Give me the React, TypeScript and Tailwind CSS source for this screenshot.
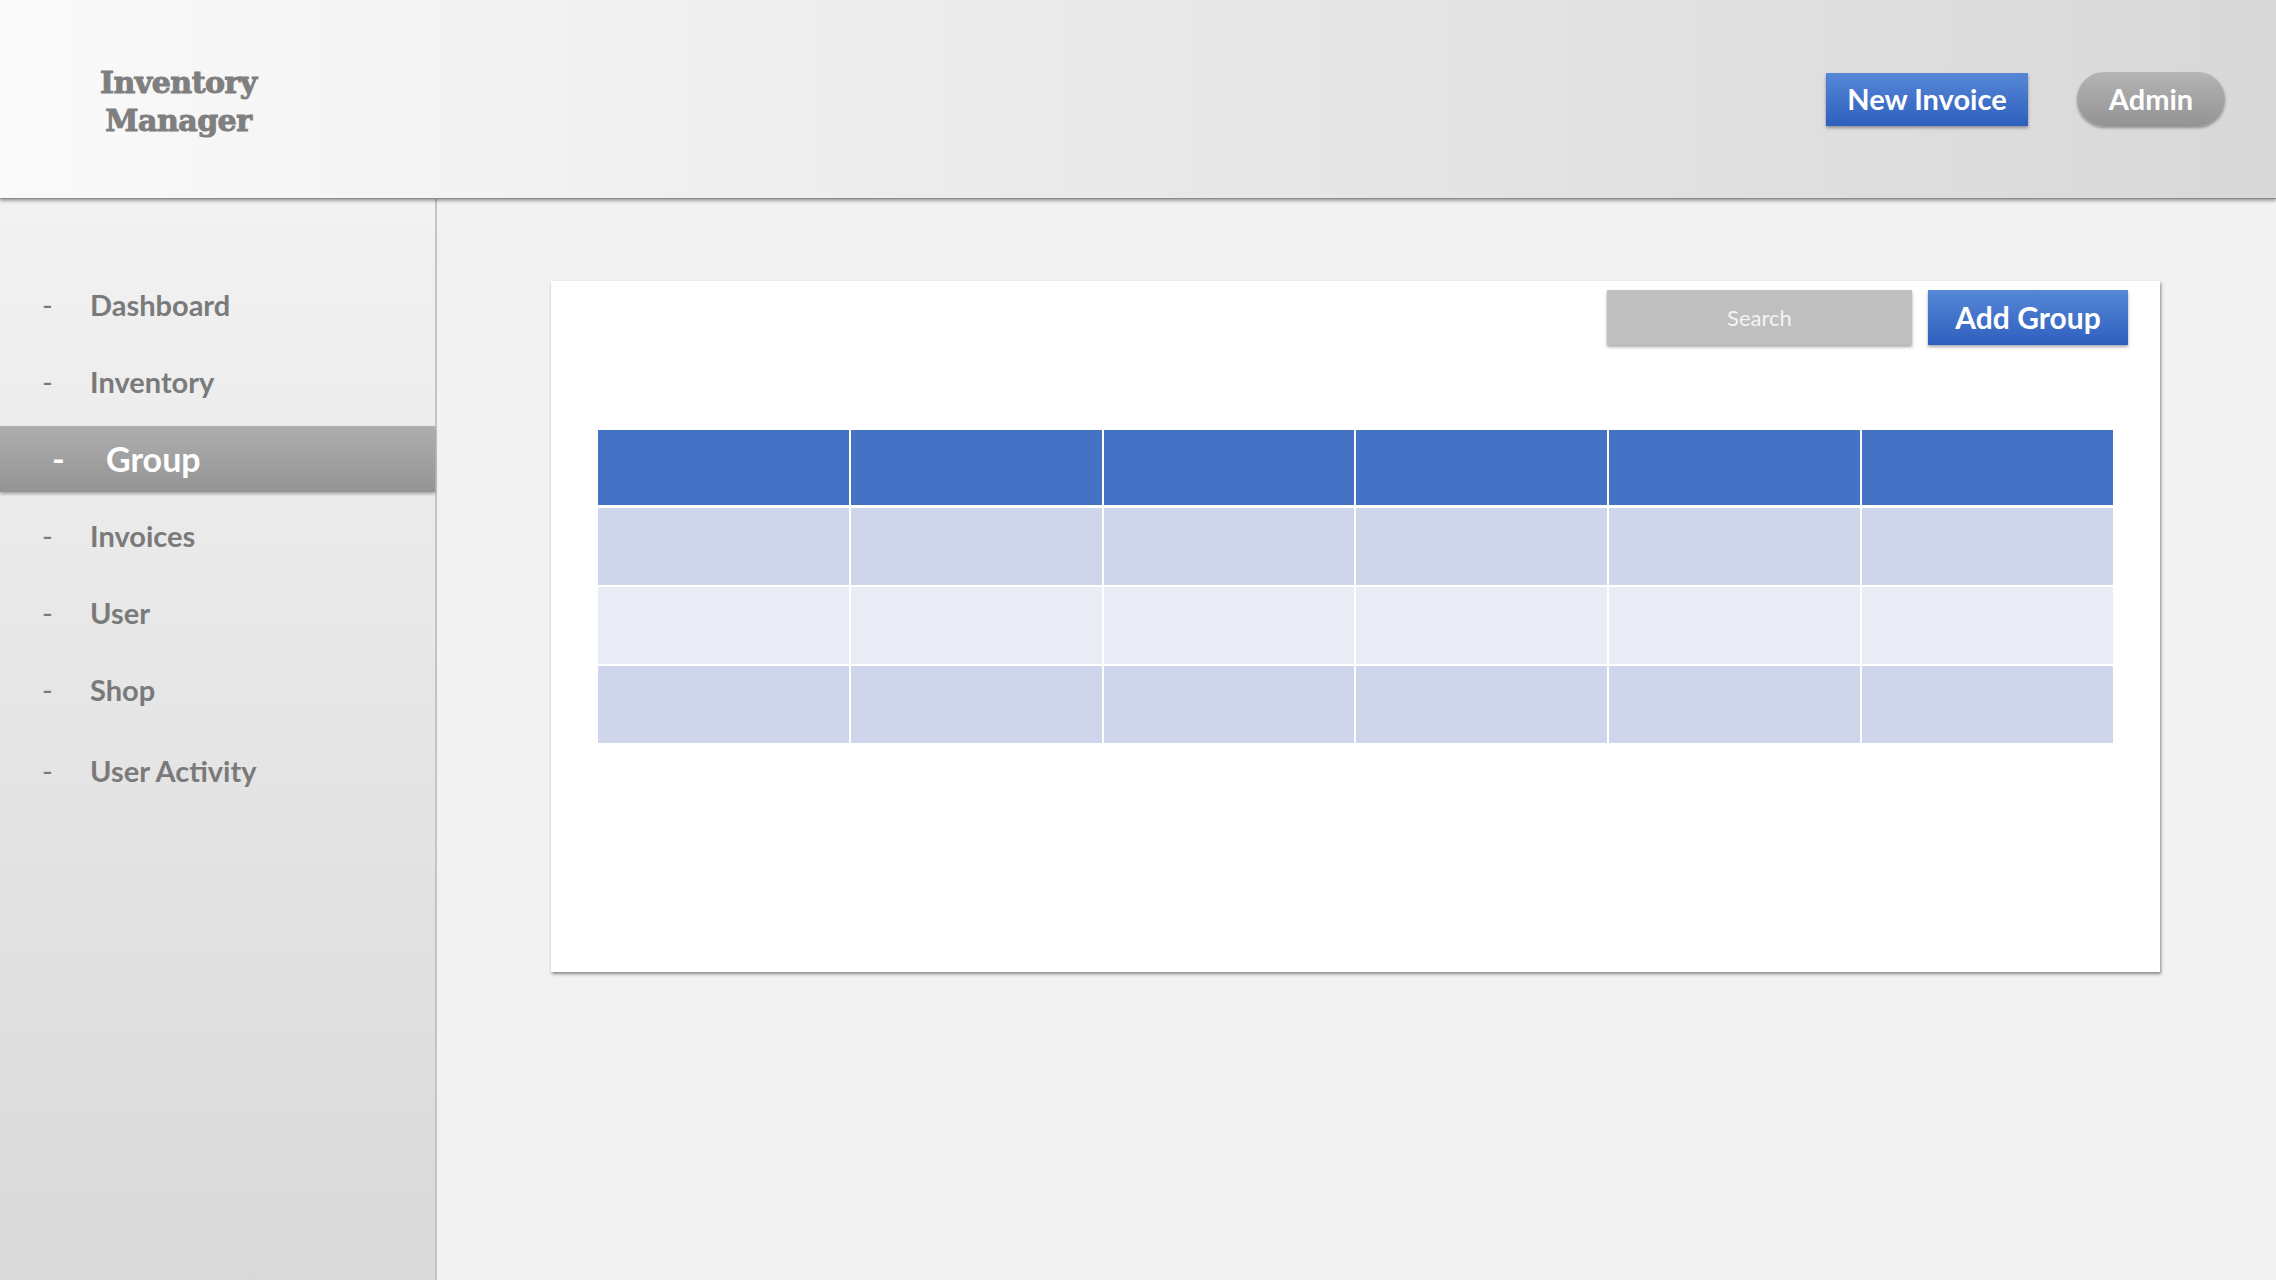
import React from 'react';

const navItems = ['Dashboard', 'Inventory', 'Group', 'Invoices', 'User', 'Shop', 'User Activity'];

const Header: React.FC = () => (
  <header className="relative z-10 flex h-[199px] items-center justify-between border-b border-[#8c8c8c] bg-gradient-to-r from-[#fafafa] to-[#d8d8d8] shadow-[0_2px_3px_rgba(0,0,0,0.35)]">
    <div
      className="ml-[100px] mt-[6px] text-center text-[30px] font-bold leading-[38px] tracking-[-0.5px] text-[#7f7f7f] [-webkit-text-stroke:1px_#7f7f7f]"
      style={{ fontFamily: '"DejaVu Serif", serif' }}
    >
      <div>Inventory</div>
      <div>Manager</div>
    </div>
    <div className="mr-[51px] flex items-center gap-[49px]" style={{ fontFamily: 'Lato, sans-serif' }}>
      <button className="h-[53px] w-[202px] bg-gradient-to-b from-[#5787d6] to-[#2e5fbe] text-[29px] font-bold text-white shadow-[0_2px_3px_rgba(0,0,0,0.35)]">
        New Invoice
      </button>
      <button className="h-[54px] w-[148px] rounded-full bg-gradient-to-b from-[#b5b5b5] to-[#939393] text-[29px] font-bold text-white shadow-[0_2px_3px_rgba(0,0,0,0.35)]">
        Admin
      </button>
    </div>
  </header>
);

const Sidebar: React.FC = () => (
  <aside
    className="flex w-[437px] flex-col border-r-2 border-[#c4c4c4] bg-gradient-to-b from-[#f2f2f2] to-[#d9d9d9] pt-[67px]"
    style={{ fontFamily: 'Lato, sans-serif' }}
  >
    {navItems.map((item) =>
      item === 'Group' ? (
        <div key={item} className="flex h-[77px] items-center">
          <div className="flex h-[66px] w-full items-center bg-gradient-to-b from-[#aeaeae] to-[#949494] text-[34px] font-bold text-white shadow-[0_2px_3px_rgba(0,0,0,0.3)]">
            <span className="w-[106px] pl-[52px]">-</span>
            <span>{item}</span>
          </div>
        </div>
      ) : (
        <div
          key={item}
          className={`flex h-[77px] items-center text-[29px] font-bold text-[#7a7a7a] ${item === 'User Activity' ? 'mt-[4px]' : ''}`}
        >
          <span className="w-[90px] pl-[42px] font-normal">-</span>
          <span>{item}</span>
        </div>
      )
    )}
  </aside>
);

const GroupTable: React.FC = () => (
  <div className="flex flex-col bg-white">
    <div className="grid h-[75px] grid-cols-6 gap-x-[2px]">
      {Array.from({ length: 6 }).map((_, i) => (
        <div key={i} className="bg-[#4472c4]" />
      ))}
    </div>
    {[0, 1, 2].map((r) => (
      <div key={r} className={`grid h-[77px] grid-cols-6 gap-x-[2px] ${r === 0 ? 'mt-[3px]' : 'mt-[2px]'}`}>
        {Array.from({ length: 6 }).map((_, i) => (
          <div key={i} className={r % 2 === 0 ? 'bg-[#cfd5ea]' : 'bg-[#e9ebf5]'} />
        ))}
      </div>
    ))}
  </div>
);

export default function App() {
  return (
    <div className="flex h-[1280px] w-full flex-col overflow-hidden bg-[#f2f2f2]">
      <Header />
      <div className="flex flex-1">
        <Sidebar />
        <main className="flex-1 pl-[114px] pt-[82px]">
          <div className="flex h-[691px] w-[1609px] flex-col bg-white shadow-[1px_2px_3px_rgba(0,0,0,0.45)]">
            <div className="flex justify-end gap-[16px] pr-[32px] pt-[9px]" style={{ fontFamily: 'Lato, sans-serif' }}>
              <div className="flex h-[55px] w-[305px] items-center justify-center bg-[#bfbfbf] text-[22px] text-[#f4f4f4] shadow-[0_2px_3px_rgba(0,0,0,0.35)]">
                Search
              </div>
              <button className="h-[55px] w-[200px] bg-gradient-to-b from-[#5787d6] to-[#2e5fbe] text-[30px] font-bold text-white shadow-[0_2px_3px_rgba(0,0,0,0.35)]">
                Add Group
              </button>
            </div>
            <div className="mx-[47px] mt-[85px]">
              <GroupTable />
            </div>
          </div>
        </main>
      </div>
    </div>
  );
}
